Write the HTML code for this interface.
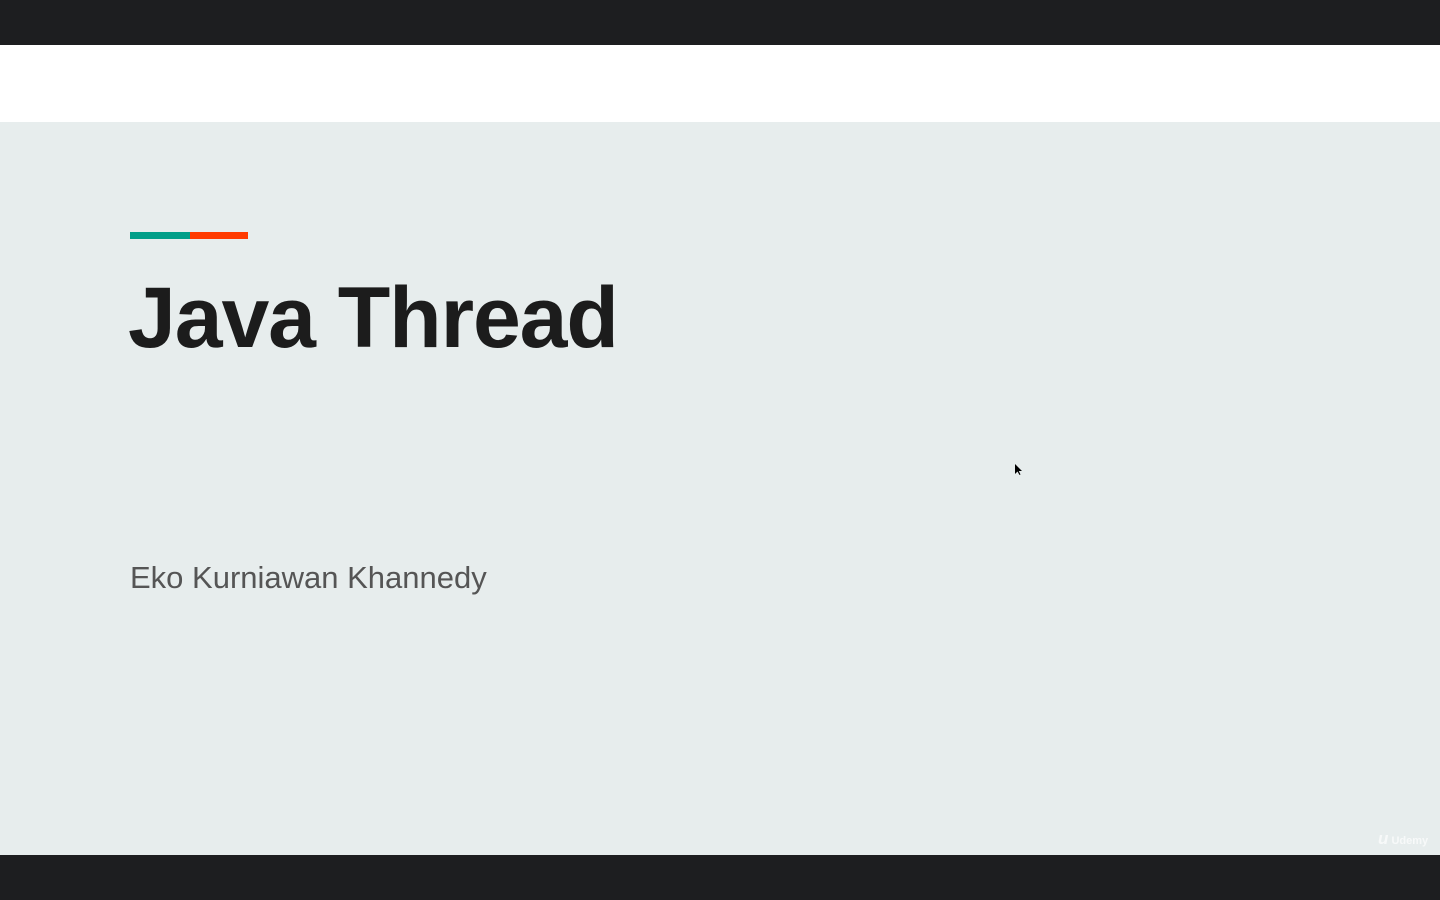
<!DOCTYPE html>
<html><head><meta charset="utf-8"><style>
html,body{margin:0;padding:0;width:1440px;height:900px;overflow:hidden;background:#1d1e20;font-family:"Liberation Sans",sans-serif}
.top{position:absolute;left:0;top:45px;width:1440px;height:77px;background:#fff}
.slide{position:absolute;left:0;top:122px;width:1440px;height:733px;background:#e7eded}
.bar1{position:absolute;left:130px;top:232px;width:60px;height:7px;background:#009e88}
.bar2{position:absolute;left:190px;top:232px;width:58px;height:7px;background:#ff3a00}
.title{position:absolute;left:128px;top:268px;font-size:86px;font-weight:bold;color:#1c1c1c;letter-spacing:-1.1px;line-height:100px;white-space:nowrap}
.sub{position:absolute;left:130px;top:558px;font-size:31px;color:#555;line-height:40px;white-space:nowrap}
.ud{position:absolute;left:1378px;top:829px;color:#fff;opacity:.7;font-size:11px;font-weight:bold}
</style></head><body>
<div class="top"></div>
<div class="slide"></div>
<div class="bar1"></div><div class="bar2"></div>
<div class="title">Java Thread</div>
<div class="sub">Eko Kurniawan Khannedy</div>
<div class="ud"><span style="font-size:17px;font-style:italic">u</span> Udemy</div>
<svg style="position:absolute;left:1014px;top:464px" width="8" height="12"><path d="M1 0 L1 10 L3.5 7.5 L5.5 11 L6.5 10.5 L4.8 7 L8 7 Z" fill="#000"/></svg>
</body></html>
